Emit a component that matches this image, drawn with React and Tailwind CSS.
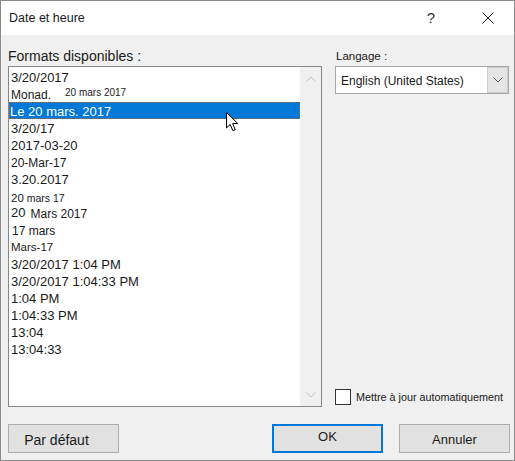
import React from "react";

const font = { fontFamily: '"Liberation Sans", Arial, sans-serif' };

function Chevron({ dir = "down", className = "" }) {
  return (
    <svg width="10" height="6" viewBox="0 0 10 6" className={className}>
      <path
        d={dir === "down" ? "M0.5 0.5 L5 5 L9.5 0.5" : "M0.5 5.5 L5 1 L9.5 5.5"}
        fill="none"
        stroke="currentColor"
        strokeWidth="1"
      />
    </svg>
  );
}

function Cursor() {
  return (
    <svg width="13" height="20" viewBox="0 0 13 20" className="absolute left-[217px] top-[45px] pointer-events-none">
      <path
        d="M0.5 0.5 L0.5 16 L4.2 12.4 L6.8 18.6 L9.2 17.6 L6.7 11.5 L11.8 11.5 Z"
        fill="#fff"
        stroke="#000"
        strokeWidth="1"
        strokeLinejoin="round"
      />
    </svg>
  );
}

const rows = [
  { k: "a", node: <span className="text-[13px]">3/20/2017</span> },
  {
    k: "b",
    node: (
      <span className="flex items-end">
        <span className="text-[12px] leading-[15px]">Monad.</span>
        <span className="ml-[14px] text-[10px] leading-[14px] relative -top-[3px]">20 mars 2017</span>
      </span>
    ),
  },
  { k: "sel", node: <span className="text-[13px]">Le 20 mars. 2017</span>, selected: true },
  { k: "c", node: <span className="text-[13px]">3/20/17</span> },
  { k: "d", node: <span className="text-[13px]">2017-03-20</span> },
  { k: "e", node: <span className="text-[12px]">20-Mar-17</span> },
  { k: "f", node: <span className="text-[13px]">3.20.2017</span> },
  {
    k: "g",
    node: (
      <span>
        <span className="text-[11.5px]">20</span>
        <span className="text-[10.5px]"> mars 17</span>
      </span>
    ),
  },
  {
    k: "h",
    node: (
      <span className="flex items-end">
        <span className="text-[13px] leading-[15px] relative -top-[2px]">20</span>
        <span className="ml-[5px] text-[12px] leading-[15px]">Mars 2017</span>
      </span>
    ),
  },
  { k: "i", node: <span className="text-[12px] pl-[1px]">17 mars</span> },
  { k: "j", node: <span className="text-[11.5px]">Mars-17</span> },
  { k: "l", node: <span className="text-[13px]">3/20/2017 1:04 PM</span> },
  { k: "m", node: <span className="text-[13px]">3/20/2017 1:04:33 PM</span> },
  { k: "n", node: <span className="text-[13px]">1:04 PM</span> },
  { k: "o", node: <span className="text-[13px]">1:04:33 PM</span> },
  { k: "p", node: <span className="text-[13px]">13:04</span> },
  { k: "q", node: <span className="text-[13px]">13:04:33</span> },
];

function ListBox() {
  return (
    <div className="relative flex h-[341px] w-[314px] border border-[#828790] bg-white">
      <div className="flex flex-1 flex-col pt-[1px]">
        {rows.map((r) =>
          r.selected ? (
            <div
              key={r.k}
              className="flex h-[17px] items-center border border-dotted border-[#b0662a] bg-[#0078d7] pt-[2px] text-white"
            >
              {r.node}
            </div>
          ) : (
            <div key={r.k} className="flex h-[17px] items-center pl-[2px] pt-[3px] text-[#1a1a1a]">
              {r.node}
            </div>
          )
        )}
      </div>
      <div className="flex w-[21px] flex-col items-center justify-between bg-[#f0f0f0] pt-[9px] pb-[8px] text-[#c2c2c2]">
        <Chevron dir="up" />
        <Chevron dir="down" />
      </div>
      <Cursor />
    </div>
  );
}

function Button({ children, focused, className = "" }) {
  return (
    <button
      className={
        "flex h-[29px] w-[111px] items-center justify-center bg-[#e1e1e1] text-[#1a1a1a] " +
        (focused ? "border-2 border-[#0078d7] pb-[3px] " : "border border-[#adadad] pt-[2px] ") +
        className
      }
    >
      {children}
    </button>
  );
}

export default function App() {
  return (
    <div style={font} className="flex h-[461px] w-[515px] flex-col border border-[#8a8a8a] bg-[#f0f0f0] text-black">
      <div className="flex h-[34px] items-center bg-white pl-[8px]">
        <span className="text-[12.5px] text-[#1a1a1a]">Date et heure</span>
        <span className="ml-auto mr-[47px] text-[15px] text-[#333]">?</span>
        <svg width="12" height="12" viewBox="0 0 12 12" className="mr-[20px]">
          <path d="M0.5 0.5 L11.5 11.5 M11.5 0.5 L0.5 11.5" stroke="#222" strokeWidth="1" />
        </svg>
      </div>

      <div className="flex flex-1 flex-col pl-[7px] pr-[4px] pt-[13px] pb-[7px]">
        <div className="flex">
          <div className="flex flex-col">
            <div className="mb-[2px] h-[16px] text-[14px] leading-[16px] text-[#1a1a1a]">Formats disponibles :</div>
            <ListBox />
          </div>
          <div className="ml-[13px] flex w-[174px] flex-col">
            <div className="mb-[2px] h-[16px] pl-[1px] text-[11.5px] leading-[16px] text-[#1a1a1a]">Langage :</div>
            <div className="flex h-[28px] border border-[#a8a8a8] bg-white">
              <div className="flex flex-1 items-center pl-[5px] pt-[1px] text-[12px] text-[#1a1a1a]">English (United States)</div>
              <div className="flex w-[21px] items-center justify-center border border-[#cccccc] bg-[#e5e5e5] text-[#555]">
                <Chevron dir="down" />
              </div>
            </div>
            <div className="flex-1" />
            <div className="mb-[2px] flex items-center">
              <div className="h-[16px] w-[16px] border border-[#333] bg-white" />
              <span className="ml-[5px] text-[10.8px] text-[#1a1a1a]">Mettre à jour automatiquement</span>
            </div>
          </div>
        </div>

        <div className="mt-auto flex">
          <Button className="pr-[14px] pt-[4px] text-[14px]">Par défaut</Button>
          <div className="ml-auto flex gap-[16px]">
            <Button focused className="text-[13px]">OK</Button>
            <Button className="text-[13px]">Annuler</Button>
          </div>
        </div>
      </div>
    </div>
  );
}
